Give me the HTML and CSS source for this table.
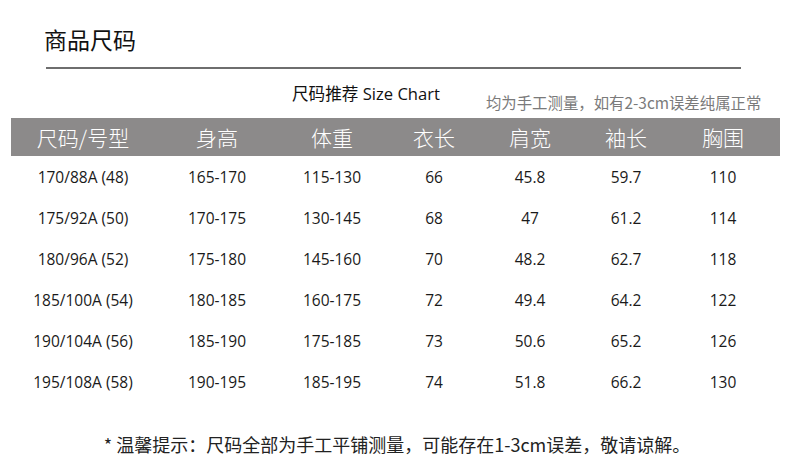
FILE: index.html
```html
<!DOCTYPE html>
<html lang="zh-CN">
<head>
<meta charset="utf-8">
<title>商品尺码</title>
<link rel="stylesheet" href="styles.css">
</head>
<body>
<div class="page">
  <h1 class="title">商品尺码</h1>
  <div class="rule"></div>
  <div class="caption">
    <span class="cap-main">尺码推荐 Size Chart</span>
    <span class="cap-note">均为手工测量，如有2-3cm误差纯属正常</span>
  </div>
  <div class="table">
    <div class="row head">
      <span>尺码/号型</span><span>身高</span><span>体重</span><span>衣长</span><span>肩宽</span><span>袖长</span><span>胸围</span>
    </div>
    <div class="row">
      <span>170/88A (48)</span><span>165-170</span><span>115-130</span><span>66</span><span>45.8</span><span>59.7</span><span>110</span>
    </div>
    <div class="row">
      <span>175/92A (50)</span><span>170-175</span><span>130-145</span><span>68</span><span>47</span><span>61.2</span><span>114</span>
    </div>
    <div class="row">
      <span>180/96A (52)</span><span>175-180</span><span>145-160</span><span>70</span><span>48.2</span><span>62.7</span><span>118</span>
    </div>
    <div class="row">
      <span>185/100A (54)</span><span>180-185</span><span>160-175</span><span>72</span><span>49.4</span><span>64.2</span><span>122</span>
    </div>
    <div class="row">
      <span>190/104A (56)</span><span>185-190</span><span>175-185</span><span>73</span><span>50.6</span><span>65.2</span><span>126</span>
    </div>
    <div class="row">
      <span>195/108A (58)</span><span>190-195</span><span>185-195</span><span>74</span><span>51.8</span><span>66.2</span><span>130</span>
    </div>
  </div>
  <p class="note">* 温馨提示：尺码全部为手工平铺测量，可能存在1-3cm误差，敬请谅解。</p>
</div>
</body>
</html>
```
FILE: styles.css
```css
* { box-sizing: border-box; }
html, body {
  margin: 0;
  padding: 0;
  background: #fff;
}
body {
  width: 790px;
  height: 474px;
  overflow: hidden;
  font-family: "Open Sans", "Noto Sans CJK SC", sans-serif;
  color: #1a1a1a;
}
.page {
  display: flex;
  flex-direction: column;
}
.title {
  margin: 23px 0 0 44px;
  font-family: "Noto Sans CJK SC", sans-serif;
  font-weight: 400;
  font-size: 23px;
  line-height: 32px;
  color: #111;
}
.rule {
  margin: 12px 0 0 46px;
  width: 695px;
  height: 2px;
  background: #6e6e6e;
}
.caption {
  display: flex;
  align-items: flex-end;
  margin: 14px 0 0 292px;
  height: 35px;
  gap: 46px;
}
.cap-main {
  font-family: "Open Sans", "Noto Sans CJK SC", sans-serif;
  font-size: 16.6px;
  line-height: 22px;
  margin-bottom: 13px;
  color: #111;
}
.cap-note {
  font-family: "Noto Sans CJK SC", sans-serif;
  font-size: 15.4px;
  line-height: 20px;
  margin-bottom: 6px;
  color: #7a7a7a;
}
.table {
  margin: 0 0 0 11px;
  width: 769px;
}
.row {
  display: grid;
  grid-template-columns: 144px 124px 106px 98px 94px 98px 96px;
  align-items: center;
  height: 41px;
  font-size: 15.5px;
}
.row span {
  text-align: center;
  white-space: nowrap;
}
.row.head {
  height: 38px;
  background: #8c8a8a;
  color: #fff;
  font-family: "Noto Sans CJK SC", sans-serif;
  font-weight: 300;
  font-size: 21px;
}
.note {
  margin: 30px 0 0 4px;
  text-align: center;
  font-family: "Noto Sans CJK SC", sans-serif;
  font-size: 18px;
  line-height: 24px;
  color: #222;
}
```
